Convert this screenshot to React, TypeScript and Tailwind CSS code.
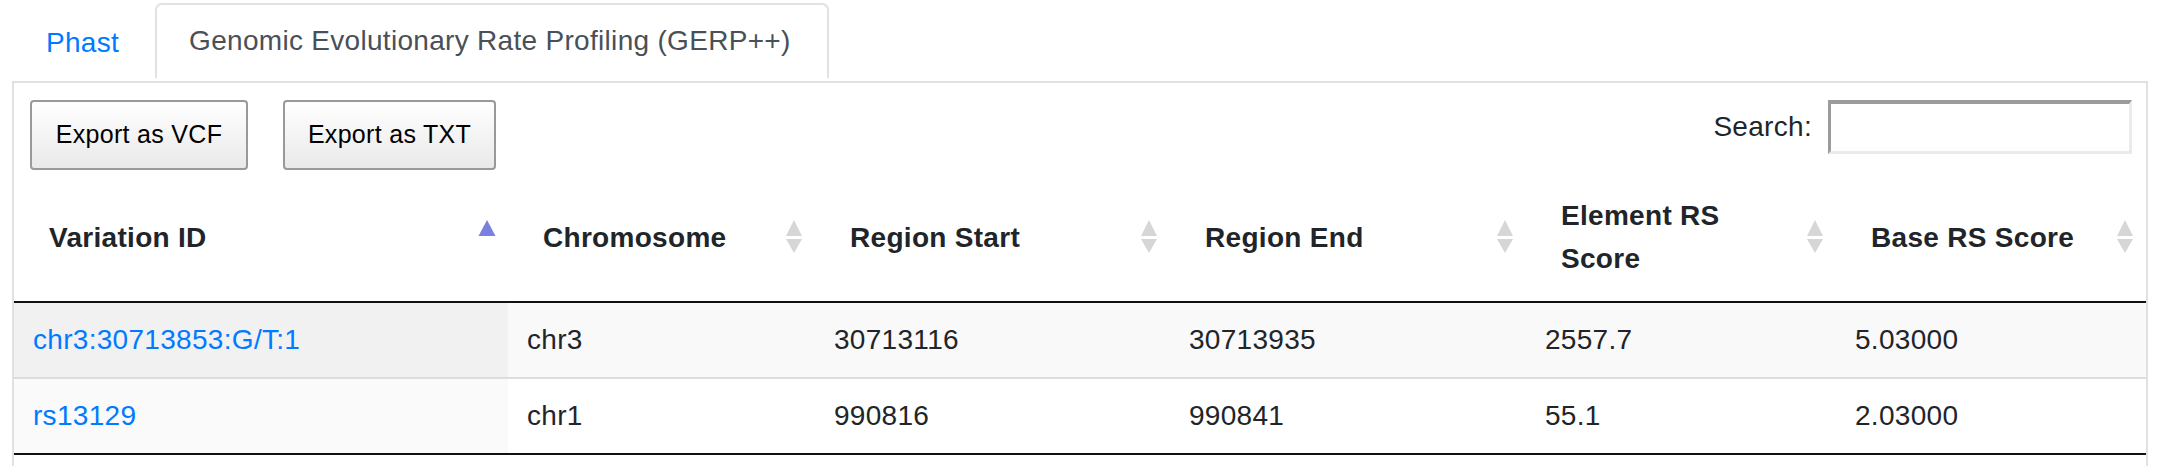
import React from "react";

type Row = {
  id: string;
  chrom: string;
  start: string;
  end: string;
  element: string;
  base: string;
};

const rows: Row[] = [
  { id: "chr3:30713853:G/T:1", chrom: "chr3", start: "30713116", end: "30713935", element: "2557.7", base: "5.03000" },
  { id: "rs13129", chrom: "chr1", start: "990816", end: "990841", element: "55.1", base: "2.03000" },
];

const columns = [
  { label: "Variation ID", width: "w-[494px]" },
  { label: "Chromosome", width: "w-[307px]" },
  { label: "Region Start", width: "w-[355px]" },
  { label: "Region End", width: "w-[356px]" },
  { label: "Element RS Score", width: "w-[310px]" },
  { label: "Base RS Score", width: "w-[310px]" },
];

// DataTables-style sort marker, asc on the first column, both elsewhere
const SortIcon = ({ active }: { active: boolean }) => (
  <svg
    width="18"
    height="34"
    viewBox="0 0 18 34"
    className="absolute right-[12px] top-[calc(50%-4px)] -translate-y-1/2"
    aria-hidden="true"
  >
    {active ? (
      <polygon points="9,0 17.5,16 0.5,16" fill="#7b80e0" />
    ) : (
      <>
        <polygon points="9,0 17,16 1,16" fill="#d6d6d6" />
        <polygon points="1,19 17,19 9,33" fill="#d6d6d6" />
      </>
    )}
  </svg>
);

export default function App() {
  return (
    <div
      className="bg-white pt-[3px] pl-[12px] pr-[14px] text-[#212529] text-[28px] tracking-[0.3px]"
      style={{ fontFamily: '"Liberation Sans", Arial, Helvetica, sans-serif' }}
    >
      {/* tabs */}
      <ul className="flex border-b-2 border-[#dee2e6]">
        <li className="-mb-[2px]">
          <a className="block pl-[32px] pr-[34px] py-[17px] leading-[42px] text-[#007bff] border-2 border-transparent">
            Phast
          </a>
        </li>
        <li className="-mb-[2px]">
          <a className="block pl-[32px] pr-[36px] py-[15px] leading-[42px] text-[#495057] bg-white border-2 border-[#dee2e6] border-b-white rounded-t-[7px]">
            Genomic Evolutionary Rate Profiling (GERP++)
          </a>
        </li>
      </ul>

      {/* panel */}
      <div className="border-x-2 border-[#dee2e6] h-[400px]">
        <div className="flex justify-between items-start pt-[17px] pl-[16px] pr-[14px]">
          <div className="flex gap-[35px]">
            <button className="w-[218px] h-[70px] border-2 border-[#999] rounded-[4px] bg-gradient-to-b from-white to-[#e9e9e9] text-[25px] text-black">
              Export as VCF
            </button>
            <button className="w-[213px] h-[70px] border-2 border-[#999] rounded-[4px] bg-gradient-to-b from-white to-[#e9e9e9] text-[25px] text-black">
              Export as TXT
            </button>
          </div>
          <label className="flex items-center gap-[16px]">
            <span>Search:</span>
            <input
              type="search"
              className="w-[304px] h-[54px] bg-white border-t-4 border-l-[3px] border-b-[3px] border-r-[3px] border-t-[#9b9b9b] border-l-[#9b9b9b] border-b-[#ebebeb] border-r-[#ebebeb] outline-none"
            />
          </label>
        </div>

        <table className="mt-[11px] w-full table-fixed border-collapse">
          <thead>
            <tr className="border-b-2 border-[#111]">
              {columns.map((c, i) => (
                <th
                  key={c.label}
                  className={`${c.width} relative text-left align-middle font-bold pl-[35px] pr-[53px] pt-[13px] pb-[21px] leading-[43px]`}
                >
                  {c.label}
                  <SortIcon active={i === 0} />
                </th>
              ))}
            </tr>
          </thead>
          <tbody className="border-b-2 border-[#111]">
            {rows.map((r, idx) => {
              const odd = idx % 2 === 0;
              return (
                <tr
                  key={r.id}
                  className={`${odd ? "bg-[#f9f9f9]" : "bg-white"} ${idx > 0 ? "border-t-2 border-[#ddd]" : ""}`}
                >
                  <td className={`${odd ? "bg-[#f1f1f1]" : "bg-[#fafafa]"} pl-[19px] py-[14px] leading-[46px]`}>
                    <a className="text-[#007bff]">{r.id}</a>
                  </td>
                  <td className="pl-[19px] py-[14px] leading-[46px]">{r.chrom}</td>
                  <td className="pl-[19px] py-[14px] leading-[46px]">{r.start}</td>
                  <td className="pl-[19px] py-[14px] leading-[46px]">{r.end}</td>
                  <td className="pl-[19px] py-[14px] leading-[46px]">{r.element}</td>
                  <td className="pl-[19px] py-[14px] leading-[46px]">{r.base}</td>
                </tr>
              );
            })}
          </tbody>
        </table>
      </div>
    </div>
  );
}
